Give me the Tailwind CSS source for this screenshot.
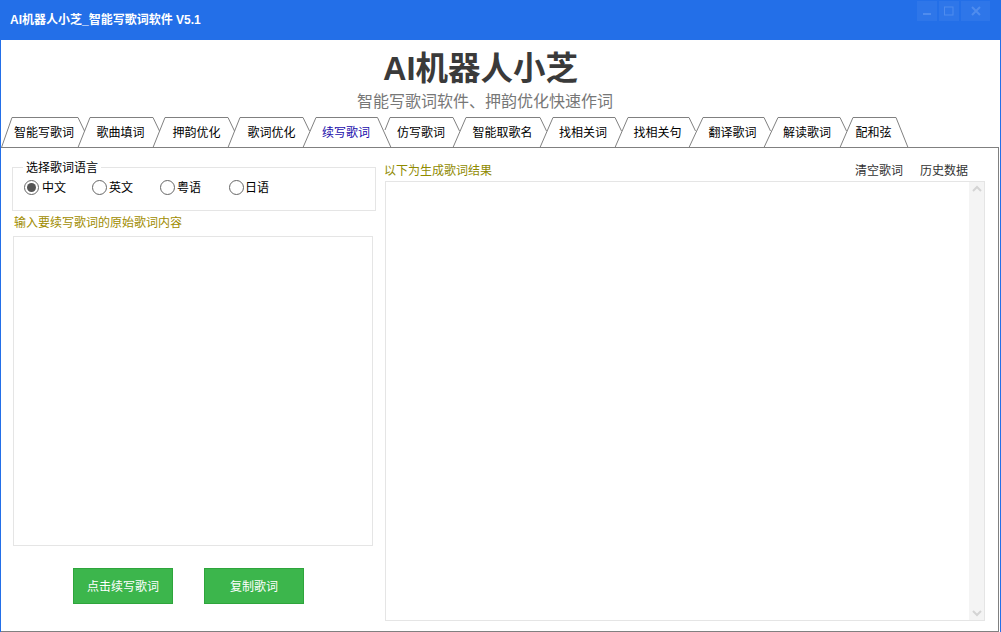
<!DOCTYPE html>
<html lang="zh">
<head>
<meta charset="utf-8">
<script src="https://cdn.jsdelivr.net/npm/@tailwindcss/browser@4"></script>
</head>
<body class="m-0 bg-white">
<div class="w-[1001px] h-[632px] overflow-hidden flex flex-col bg-white border-x border-[#236fe8] font-['Noto_Sans_CJK_SC','Noto_Sans',sans-serif] text-[12px] text-black">
  <header class="h-10 -mx-px shrink-0 bg-[#236fe8] flex items-start justify-between">
    <div class="pl-[10px] pt-[11px] text-[12px] leading-[18px] font-bold text-white font-['Liberation_Sans','Noto_Sans_CJK_SC',sans-serif]">AI机器人小芝_智能写歌词软件 V5.1</div>
    <div class="flex gap-[2px] pt-px pr-[11px]">
      <div class="w-5 h-5 bg-white/5 flex items-center justify-center"><svg width="10" height="10" viewBox="0 0 10 10"><path d="M1 8h8" stroke="#4f8cee" stroke-width="2"/></svg></div>
      <div class="w-5 h-5 bg-white/5 flex items-center justify-center"><svg width="10" height="10" viewBox="0 0 10 10"><rect x=".5" y="1" width="8.5" height="8" fill="none" stroke="#4f8cee" stroke-width="1"/></svg></div>
      <div class="w-[29px] h-5 bg-white/5 flex items-center justify-center"><svg width="10" height="10" viewBox="0 0 10 10"><path d="M1 1l8 8M9 1l-8 8" stroke="#4f8cee" stroke-width="2"/></svg></div>
    </div>
  </header>

  <div class="h-[77px] shrink-0 flex flex-col items-start">
    <h1 class="mt-[7px] ml-[382px] text-[32.5px] leading-[44px] font-bold text-[#3a3a3a] font-['Liberation_Sans','Noto_Sans_CJK_SC',sans-serif]">AI机器人小芝</h1>
    <p class="-mt-[2px] ml-[356px] text-[16px] leading-[22px] text-[#777]">智能写歌词软件、押韵优化快速作词</p>
  </div>

  <nav class="relative h-[30px] shrink-0 -ml-px">
    <svg class="absolute left-0 top-0" width="1001" height="31" viewBox="0 0 1001 31" fill="none" stroke="#808080" stroke-width="1">
      <path d="M1.5 30.5L12 .5H78L84.5 14"/>
      <path d="M78 30.5L90 .5H153L159.5 14M78 30.5H153"/>
      <path d="M153 30.5L165 .5H228L234.5 14M153 30.5H228"/>
      <path d="M228 30.5L240 .5H303L309.5 14M228 30.5H303"/>
      <path d="M303 30.5L316 .5H377.5L391 30.5H303"/>
      <path d="M385 13L390 .5H453L459.5 14M391 30.5H453"/>
      <path d="M453 30.5L466 .5H540L546.5 14M453 30.5H540"/>
      <path d="M540 30.5L553 .5H615L621.5 14M540 30.5H615"/>
      <path d="M615 30.5L628 .5H689L695.5 14M615 30.5H689"/>
      <path d="M689 30.5L703 .5H764L770.5 14M689 30.5H764"/>
      <path d="M764 30.5L778 .5H840L846.5 14M764 30.5H840"/>
      <path d="M840 30.5L853 .5H896L908 30.5H840"/>
    </svg>
    <ul class="relative flex h-full pl-[12px] leading-[29px] text-center">
      <li class="w-[64px] mr-[13px]">智能写歌词</li>
      <li class="w-[63px] mr-[13px]">歌曲填词</li>
      <li class="w-[63px] mr-[12px]">押韵优化</li>
      <li class="w-[63px] mr-[12px]">歌词优化</li>
      <li class="w-[62px] mr-[12px] text-[#1a0dab]">续写歌词</li>
      <li class="w-[64px] mr-[13px]">仿写歌词</li>
      <li class="w-[73px] mr-[13px]">智能取歌名</li>
      <li class="w-[62px] mr-[13px]">找相关词</li>
      <li class="w-[61px] mr-[14px]">找相关句</li>
      <li class="w-[61px] mr-[13px]">翻译歌词</li>
      <li class="w-[62px] mr-[14px]">解读歌词</li>
      <li class="w-[43px]">配和弦</li>
    </ul>
  </nav>

  <main class="flex-1 min-h-0 flex border-t border-r border-b border-[#808080] mr-px">
    <section class="w-[384px] shrink-0 flex flex-col pl-[11px]">
      <fieldset class="mt-[11px] w-[364px] h-[52px] border border-[#e5e5e5] pl-[10px] pr-0">
        <legend class="px-[3px] leading-[16px]">选择歌词语言</legend>
        <div class="flex mt-[4px] ml-px leading-[16px]">
          <label class="flex items-center w-[68px]"><span class="w-[15px] h-[15px] mr-[3px] rounded-full border border-[#666] flex items-center justify-center"><span class="w-[9px] h-[9px] rounded-full bg-[#555]"></span></span>中文</label>
          <label class="flex items-center w-[68px]"><span class="w-[15px] h-[15px] mr-[2px] rounded-full border border-[#666]"></span>英文</label>
          <label class="flex items-center w-[69px]"><span class="w-[15px] h-[15px] mr-[2px] rounded-full border border-[#666]"></span>粤语</label>
          <label class="flex items-center"><span class="w-[15px] h-[15px] mr-px rounded-full border border-[#666]"></span>日语</label>
        </div>
      </fieldset>
      <p class="ml-[2px] mt-[2px] leading-[18px] text-[#a08c00]">输入要续写歌词的原始歌词内容</p>
      <div class="ml-px mt-[5px] w-[360px] h-[310px] border border-[#e5e5e5]"></div>
      <div class="flex mt-[22px] ml-[61px] gap-[31px]">
        <button class="w-[100px] h-9 bg-[#3cb64c] border border-[#2ea53c] text-white">点击续写歌词</button>
        <button class="w-[100px] h-9 bg-[#3cb64c] border border-[#2ea53c] text-white">复制歌词</button>
      </div>
    </section>

    <section class="flex-1 min-w-0 flex flex-col">
      <div class="h-[33px] shrink-0 flex items-start justify-between">
        <span class="mt-[13px] -ml-px leading-[17px] text-[#8f8a00]">以下为生成歌词结果</span>
        <span class="flex gap-[17px] mt-[13px] mr-[30px] leading-[17px] text-[#333]"><span>清空歌词</span><span>历史数据</span></span>
      </div>
      <div class="w-[600px] h-[440px] border border-[#e5e5e5] flex justify-end">
        <div class="w-[15px] h-full bg-[#f4f4f4] flex flex-col items-center justify-between py-[3px]">
          <svg width="10" height="8" viewBox="0 0 10 8"><path d="M1 6l4-4 4 4" fill="none" stroke="#d4d4d4" stroke-width="2"/></svg>
          <svg width="10" height="8" viewBox="0 0 10 8"><path d="M1 2l4 4 4-4" fill="none" stroke="#d4d4d4" stroke-width="2"/></svg>
        </div>
      </div>
    </section>
  </main>
</div>
</body>
</html>
